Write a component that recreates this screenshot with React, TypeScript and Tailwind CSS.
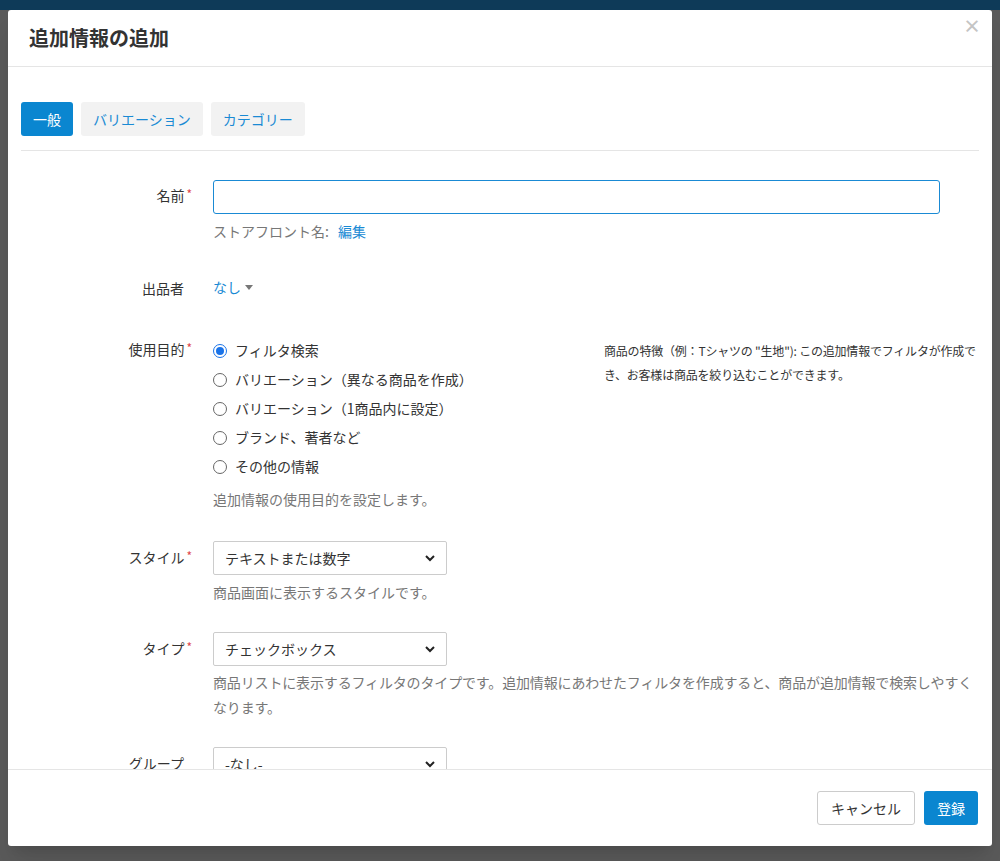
import React from "react";

const Req = () => <span className="text-[#e0474c] text-[12px] ml-[2px] relative -top-[2px]">*</span>;

const Label = ({ children, req }: { children: React.ReactNode; req?: boolean }) => (
  <div className="w-[172px] shrink-0 text-right text-[14px] text-[#333] pr-[1px]">
    {children}
    {req ? <Req /> : <span className="inline-block w-[8px]" />}
  </div>
);

const Select = ({ value }: { value: string }) => (
  <div className="w-[234px] h-[34px] border border-[#ccc] rounded-[2px] bg-white flex items-center justify-between px-[11px] text-[14px] text-[#333]">
    <span>{value}</span>
    <svg width="10" height="8" viewBox="0 0 10 8"><path d="M1 2l4 4 4-4" fill="none" stroke="#222" strokeWidth="2" /></svg>
  </div>
);

const Radio = ({ checked, label }: { checked?: boolean; label: string }) => (
  <div className="flex items-center h-[29px] gap-[8px]">
    <span className={`w-[14px] h-[14px] rounded-full border ${checked ? "border-[#1a73e8]" : "border-[#666]"} flex items-center justify-center bg-white`}>
      {checked && <span className="w-[8px] h-[8px] rounded-full bg-[#1a73e8]" />}
    </span>
    <span className="text-[14px] text-[#333]">{label}</span>
  </div>
);

export default function App() {
  return (
    <div className="w-[1000px] h-[861px] relative overflow-hidden bg-[#5a5a5a]" style={{ fontFamily: '"Noto Sans CJK JP", "Noto Sans", sans-serif' }}>
      <div className="h-[10px] bg-[#0e3a58]" />
      <div className="absolute left-[8px] top-[10px] w-[984px] h-[836px] bg-white rounded-[3px] shadow-xl flex flex-col">
        <div className="h-[57px] border-b border-[#e5e5e5] flex items-center justify-between px-[21px] shrink-0">
          <h1 className="text-[20px] font-bold text-[#333]">追加情報の追加</h1>
          <span className="text-[#c4c4c4] text-[18px] font-bold self-start mt-[2px] -mr-[10px]">×</span>
        </div>
        <div className="flex-1 overflow-hidden px-[13px]">
          <div className="pt-[35px] pb-[14px] flex gap-[8px] border-b border-[#e5e5e5]">
            <div className="h-[34px] px-[12px] rounded-[3px] bg-[#0a86d0] text-white text-[14px] flex items-center">一般</div>
            <div className="h-[34px] px-[12px] rounded-[3px] bg-[#f2f2f2] text-[#1a8ad4] text-[14px] flex items-center">バリエーション</div>
            <div className="h-[34px] px-[12px] rounded-[3px] bg-[#f2f2f2] text-[#1a8ad4] text-[14px] flex items-center">カテゴリー</div>
          </div>
          <div className="flex flex-col">
            <div className="flex gap-[20px] mt-[29px]">
              <div className="pt-[5px]"><Label req>名前</Label></div>
              <div className="flex-1 pr-[39px]">
                <div className="h-[34px] border border-[#1a8ad4] rounded-[3px]" />
                <div className="mt-[7px] text-[14px] text-[#777]">ストアフロント名: <span className="ml-[6px] text-[#1a8ad4]">編集</span></div>
              </div>
            </div>
            <div className="flex gap-[20px] mt-[36px]">
              <Label>出品者</Label>
              <div className="text-[14px] text-[#1a8ad4] flex items-center gap-[4px] -mt-[3px]">なし<svg width="8" height="5" viewBox="0 0 8 5"><path d="M0 0h8L4 5z" fill="#777" /></svg></div>
            </div>
            <div className="flex gap-[20px] mt-[38px]">
              <div className="pt-[2px]"><Label req>使用目的</Label></div>
              <div className="w-[371px] -mt-[1px]">
                <Radio checked label="フィルタ検索" />
                <Radio label="バリエーション（異なる商品を作成）" />
                <Radio label="バリエーション（1商品内に設定）" />
                <Radio label="ブランド、著者など" />
                <Radio label="その他の情報" />
                <div className="mt-[8px] text-[14px] text-[#777]">追加情報の使用目的を設定します。</div>
              </div>
              <div className="flex-1 text-[12px] tracking-[-0.2px] text-[#333] leading-[24px] mt-[2px] -mr-[4px]">商品の特徴（例：Tシャツの "生地"): この追加情報でフィルタが作成でき、お客様は商品を絞り込むことができます。</div>
            </div>
            <div className="flex gap-[20px] mt-[31px]">
              <div className="pt-[6px]"><Label req>スタイル</Label></div>
              <div>
                <Select value="テキストまたは数字" />
                <div className="mt-[7px] text-[14px] text-[#777]">商品画面に表示するスタイルです。</div>
              </div>
            </div>
            <div className="flex gap-[20px] mt-[29px]">
              <div className="pt-[6px]"><Label req>タイプ</Label></div>
              <div className="flex-1">
                <Select value="チェックボックス" />
                <div className="mt-[4px] text-[14px] tracking-[-0.15px] text-[#777] leading-[25px]">商品リストに表示するフィルタのタイプです。追加情報にあわせたフィルタを作成すると、商品が追加情報で検索しやすくなります。</div>
              </div>
            </div>
            <div className="flex gap-[20px] mt-[27px]">
              <div className="pt-[6px]"><Label>グループ</Label></div>
              <Select value="-なし-" />
            </div>
          </div>
        </div>
        <div className="h-[77px] border-t border-[#e5e5e5] shrink-0 flex items-center justify-end gap-[9px] px-[14px]">
          <div className="h-[34px] px-[13px] border border-[#ccc] rounded-[3px] text-[14px] text-[#333] flex items-center">キャンセル</div>
          <div className="h-[34px] px-[13px] rounded-[3px] bg-[#0a86d0] text-white text-[14px] flex items-center">登録</div>
        </div>
      </div>
    </div>
  );
}
